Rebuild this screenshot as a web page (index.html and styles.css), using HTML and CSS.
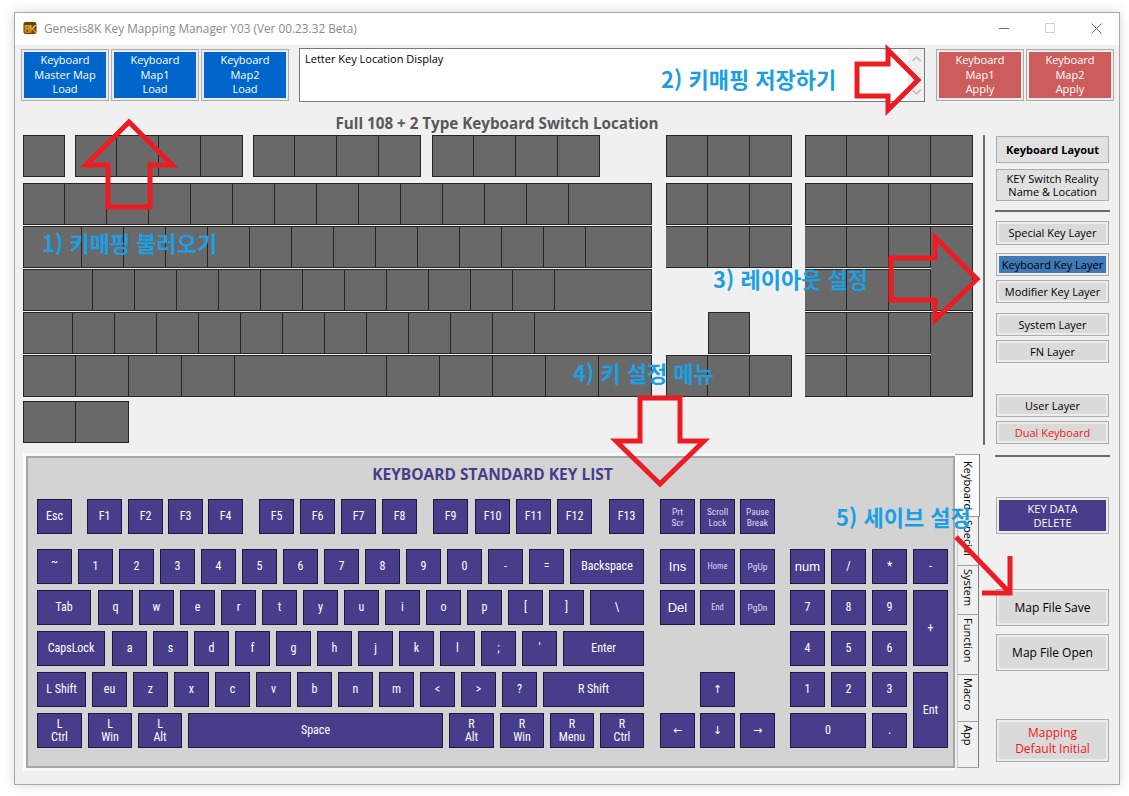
FILE: index.html
```html
<!DOCTYPE html>
<html lang="ko">
<head>
<meta charset="utf-8">
<title>Genesis8K Key Mapping Manager</title>
<link rel="stylesheet" href="styles.css">
</head>
<body>
<div class="window">
  <div class="titlebar">
    <svg class="appicon" width="14" height="14" viewBox="0 0 14 14">
      <defs><linearGradient id="gold" x1="0" y1="0" x2="0" y2="1"><stop offset="0" stop-color="#ffd955"/><stop offset="1" stop-color="#c27410"/></linearGradient></defs>
      <rect x="0.5" y="1" width="13" height="12" rx="2" fill="#6b4300"/>
      <text x="7" y="11.5" text-anchor="middle" font-family="Liberation Sans" font-weight="700" font-size="11" letter-spacing="-1" fill="url(#gold)">8K</text>
    </svg>
    <span class="title">Genesis8K Key Mapping Manager Y03 (Ver 00.23.32 Beta)</span>
    <div class="winctl">
      <span class="wc"><svg width="10" height="10" viewBox="0 0 10 10"><path d="M0 5.5h10" stroke="#6e6e6e" stroke-width="1"/></svg></span>
      <span class="wc"><svg width="10" height="10" viewBox="0 0 10 10"><rect x="0.5" y="0.5" width="9" height="9" fill="none" stroke="#cfcfcf"/></svg></span>
      <span class="wc"><svg width="11" height="11" viewBox="0 0 11 11"><path d="M0.5 0.5l10 10M10.5 0.5l-10 10" stroke="#6e6e6e" stroke-width="1"/></svg></span>
    </div>
  </div>

  <div class="client">
    <div class="toprow">
      <div class="fbtn"><div class="fin blue">Keyboard<br>Master Map<br>Load</div></div>
      <div class="fbtn ml2"><div class="fin blue">Keyboard<br>Map1<br>Load</div></div>
      <div class="fbtn ml2"><div class="fin blue">Keyboard<br>Map2<br>Load</div></div>
      <div class="textbox">
        <div class="tb-text">Letter Key Location Display</div>
        <div class="vscroll">
          <svg width="9" height="6" viewBox="0 0 9 6"><path d="M0.5 5L4.5 1L8.5 5" fill="none" stroke="#b4b4b4" stroke-width="1.2"/></svg>
          <svg width="9" height="6" viewBox="0 0 9 6"><path d="M0.5 1L4.5 5L8.5 1" fill="none" stroke="#b4b4b4" stroke-width="1.2"/></svg>
        </div>
      </div>
      <div class="fbtn ml11"><div class="fin red">Keyboard<br>Map1<br>Apply</div></div>
      <div class="fbtn ml2"><div class="fin red">Keyboard<br>Map2<br>Apply</div></div>
    </div>

    <div class="main">
      <div class="leftcol">
        <div class="heading">Full 108 + 2 Type Keyboard Switch Location</div>

        <div class="gk">
          <div class="gk-r1">
            <div class="gg"><i class="g"></i></div>
            <div class="gg m10"><i class="g"></i><i class="g"></i><i class="g"></i><i class="g"></i></div>
            <div class="gg m10"><i class="g"></i><i class="g"></i><i class="g"></i><i class="g"></i></div>
            <div class="gg m11"><i class="g"></i><i class="g"></i><i class="g"></i><i class="g"></i></div>
            <div class="gg m66"><i class="g"></i><i class="g"></i><i class="g"></i></div>
            <div class="gg m13"><i class="g"></i><i class="g"></i><i class="g"></i><i class="g"></i></div>
          </div>
          <div class="gk-low">
            <div class="gmain">
              <div class="grow"><i class="g"></i><i class="g"></i><i class="g"></i><i class="g"></i><i class="g"></i><i class="g"></i><i class="g"></i><i class="g"></i><i class="g"></i><i class="g"></i><i class="g"></i><i class="g"></i><i class="g"></i><i class="g w83"></i></div>
              <div class="grow"><i class="g w59"></i><i class="g"></i><i class="g"></i><i class="g"></i><i class="g"></i><i class="g"></i><i class="g"></i><i class="g"></i><i class="g"></i><i class="g"></i><i class="g"></i><i class="g"></i><i class="g"></i><i class="g w66"></i></div>
              <div class="grow"><i class="g w70"></i><i class="g"></i><i class="g"></i><i class="g"></i><i class="g"></i><i class="g"></i><i class="g"></i><i class="g"></i><i class="g"></i><i class="g"></i><i class="g"></i><i class="g"></i><i class="g w97"></i></div>
              <div class="grow"><i class="g w50"></i><i class="g"></i><i class="g"></i><i class="g"></i><i class="g"></i><i class="g"></i><i class="g"></i><i class="g"></i><i class="g"></i><i class="g"></i><i class="g"></i><i class="g"></i><i class="g w117"></i></div>
              <div class="grow"><i class="g w53"></i><i class="g w53"></i><i class="g w53"></i><i class="g w53"></i><i class="g w152"></i><i class="g w53"></i><i class="g w53"></i><i class="g w53"></i><i class="g w53"></i><i class="g w53"></i></div>
              <div class="grow r7"><i class="g w53"></i><i class="g w53"></i></div>
            </div>
            <div class="gnav">
              <i class="g"></i><i class="g nl"></i><i class="g nl"></i>
              <i class="g"></i><i class="g nl"></i><i class="g nl"></i>
              <b></b><b></b><b></b>
              <b></b><i class="g"></i><b></b>
              <i class="g"></i><i class="g nl"></i><i class="g nl"></i>
            </div>
            <div class="gnum">
              <i class="g"></i><i class="g nl"></i><i class="g nl"></i><i class="g nl"></i>
              <i class="g"></i><i class="g nl"></i><i class="g nl"></i><i class="g nl tall"></i>
              <i class="g"></i><i class="g nl"></i><i class="g nl"></i>
              <i class="g"></i><i class="g nl"></i><i class="g nl"></i><i class="g nl tall"></i>
              <i class="g"></i><i class="g nl"></i><i class="g nl"></i>
            </div>
          </div>
        </div>

        <div class="tabframe">
          <div class="kwrap">
            <div class="kpanel">
              <div class="kp-title">KEYBOARD STANDARD KEY LIST</div>
              <div class="pf">
                <span class="p">Esc</span>
                <span class="p ml15">F1</span><span class="p ml6">F2</span><span class="p ml5">F3</span><span class="p ml5">F4</span>
                <span class="p ml16">F5</span><span class="p ml6">F6</span><span class="p ml6">F7</span><span class="p ml6">F8</span>
                <span class="p ml16">F9</span><span class="p ml7">F10</span><span class="p ml6">F11</span><span class="p ml6">F12</span>
                <span class="p ml17">F13</span>
                <span class="p sm ml16">Prt<br>Scr</span><span class="p sm ml5">Scroll<br>Lock</span><span class="p sm ml5">Pause<br>Break</span>
              </div>
              <div class="plow">
                <div class="pmain">
                  <div class="prow">
                    <span class="p tilde">~</span><span class="p">1</span><span class="p">2</span><span class="p">3</span><span class="p">4</span><span class="p">5</span><span class="p">6</span><span class="p">7</span><span class="p">8</span><span class="p">9</span><span class="p">0</span><span class="p">-</span><span class="p">=</span><span class="p w74">Backspace</span>
                  </div>
                  <div class="prow">
                    <span class="p w54 mr1">Tab</span><span class="p">q</span><span class="p">w</span><span class="p">e</span><span class="p">r</span><span class="p">t</span><span class="p">y</span><span class="p">u</span><span class="p">i</span><span class="p">o</span><span class="p">p</span><span class="p">[</span><span class="p">]</span><span class="p w54">\</span>
                  </div>
                  <div class="prow">
                    <span class="p w68 mr1">CapsLock</span><span class="p">a</span><span class="p">s</span><span class="p">d</span><span class="p">f</span><span class="p">g</span><span class="p">h</span><span class="p">j</span><span class="p">k</span><span class="p">l</span><span class="p">;</span><span class="p">'</span><span class="p w81">Enter</span>
                  </div>
                  <div class="prow">
                    <span class="p w49">L Shift</span><span class="p">eu</span><span class="p">z</span><span class="p">x</span><span class="p">c</span><span class="p">v</span><span class="p">b</span><span class="p">n</span><span class="p">m</span><span class="p">&lt;</span><span class="p">&gt;</span><span class="p">?</span><span class="p w101">R Shift</span>
                  </div>
                  <div class="prow">
                    <span class="p w45">L<br>Ctrl</span><span class="p w44">L<br>Win</span><span class="p w44">L<br>Alt</span><span class="p w255">Space</span><span class="p w45">R<br>Alt</span><span class="p w44">R<br>Win</span><span class="p w44">R<br>Menu</span><span class="p w44">R<br>Ctrl</span>
                  </div>
                </div>
                <div class="pnav">
                  <span class="p big">Ins</span><span class="p xs">Home</span><span class="p sm">PgUp</span>
                  <span class="p big">Del</span><span class="p xs">End</span><span class="p sm">PgDn</span>
                  <b></b><b></b><b></b>
                  <b></b><span class="p arr">↑</span><b></b>
                  <span class="p arr">←</span><span class="p arr">↓</span><span class="p arr">→</span>
                </div>
                <div class="pnum">
                  <span class="p big">num</span><span class="p">/</span><span class="p">*</span><span class="p">-</span>
                  <span class="p">7</span><span class="p">8</span><span class="p">9</span><span class="p span2r">+</span>
                  <span class="p">4</span><span class="p">5</span><span class="p">6</span>
                  <span class="p">1</span><span class="p">2</span><span class="p">3</span><span class="p span2r">Ent</span>
                  <span class="p span2c">0</span><span class="p">.</span>
                </div>
              </div>
            </div>
          </div>
          <div class="vtabs">
            <div class="vt sel h63">Keyboard</div>
            <div class="vt h49">Special</div>
            <div class="vt h49">System</div>
            <div class="vt h60">Function</div>
            <div class="vt h47">Macro</div>
            <div class="vt h46">App</div>
          </div>
        </div>
      </div>

      <div class="rightcol">
        <div class="rupper">
          <div class="vline"></div>
          <div class="rbtns">
            <div class="rb h27 mt1 bold">Keyboard Layout</div>
            <div class="rb h32 mt6">KEY Switch Reality<br>Name &amp; Location</div>
            <div class="hr hr1"></div>
            <div class="rb2 h24 mt9"><div class="ri">Special Key Layer</div></div>
            <div class="rb2 h23 mt8"><div class="ri active">Keyboard Key Layer</div></div>
            <div class="rb2 h23 mt4"><div class="ri">Modifier Key Layer</div></div>
            <div class="rb2 h23 mt10"><div class="ri">System Layer</div></div>
            <div class="rb2 h23 mt4"><div class="ri">FN Layer</div></div>
            <div class="rb2 h23 mt31"><div class="ri">User Layer</div></div>
            <div class="rb2 h23 mt4"><div class="ri redtxt">Dual Keyboard</div></div>
          </div>
        </div>
        <div class="hr hr2"></div>
        <div class="rlow">
          <div class="rb2 h37 mt40"><div class="ri purple">KEY DATA<br>DELETE</div></div>
          <div class="rb2 h37 mt55"><div class="ri big13">Map File Save</div></div>
          <div class="rb2 h37 mt8"><div class="ri big13">Map File Open</div></div>
          <div class="rb2 h43 mt48"><div class="ri big13 redtxt">Mapping<br>Default Initial</div></div>
        </div>
      </div>
    </div>
  </div>
</div>

<svg class="anno" width="1129" height="796" viewBox="0 0 1129 796">
  <g fill="none" stroke="#ec1c24" stroke-width="5" stroke-linejoin="miter" stroke-miterlimit="10">
    <polygon points="129,122 172,165 150,165 150,207 108,207 108,165 86,165"/>
    <polygon points="857,64 888,64 888,50 918,80 888,110 888,96 857,96"/>
    <polygon points="891,258 935,258 935,237 977,279 935,320 935,300 891,300"/>
    <polygon points="640,398 680,398 680,441 704,441 660,484 616,441 640,441"/>
    <polyline points="956,537 1010,593"/>
    <polyline points="1010,556 1010,593 982,593"/>
  </g>
</svg>
<span class="note n1">1) 키매핑 불러오기</span>
<span class="note n2">2) 키매핑 저장하기</span>
<span class="note n3">3) 레이아웃 설정</span>
<span class="note n4">4) 키 설정 메뉴</span>
<span class="note n5">5) 세이브 설정</span>
</body>
</html>
```

FILE: styles.css
```css
* { box-sizing: border-box; margin: 0; padding: 0; }

html, body { width: 1129px; height: 796px; overflow: hidden; }

body {
  position: relative;
  background: #ffffff;
  padding: 12px 0 0 14px;
  font-family: "Open Sans", "Noto Sans", "Noto Sans CJK KR", sans-serif;
  font-size: 11px;
  color: #000;
}

i, b { display: block; font-style: normal; }

/* ---------- window ---------- */
.window {
  width: 1106px;
  height: 773px;
  border: 1px solid #a8a8a8;
  background: #f0f0f0;
  box-shadow: 0 0 10px rgba(0, 0, 0, 0.16);
  display: flex;
  flex-direction: column;
}

.titlebar {
  height: 32px;
  background: #fff;
  display: flex;
  align-items: center;
  flex: none;
}
.appicon { margin-left: 8px; margin-top: -2px; flex: none; }
.title { margin-left: 7px; margin-top: -3px; font-size: 11.8px; color: #8a8a8a; white-space: nowrap; }
.winctl { margin-left: auto; display: flex; align-self: flex-start; }
.wc { width: 46px; height: 30px; display: flex; align-items: center; justify-content: center; }

.client { flex: 1; padding-left: 6px; }

/* ---------- top row ---------- */
.toprow { display: flex; align-items: flex-start; padding-top: 4px; height: 57px; }
.fbtn {
  flex: none;
  width: 88px;
  height: 52px;
  border: 1px solid #adadad;
  padding: 2px;
  background: #ebebeb;
}
.ml2 { margin-left: 2px; }
.ml11 { margin-left: 11px; }
.fin {
  height: 100%;
  display: flex;
  align-items: center;
  justify-content: center;
  text-align: center;
  color: #fff;
  font-size: 11px;
  line-height: 14.5px;
}
.fin.blue { background: #0066cc; }
.fin.red { background: #cd5c5c; }

.textbox {
  flex: none;
  margin-left: 10px;
  margin-top: -1px;
  width: 626px;
  height: 54px;
  border: 1px solid #7a7a7a;
  background: #fff;
  display: flex;
}
.tb-text { flex: 1; padding: 2px 5px; font-size: 11px; line-height: 15px; }
.vscroll {
  width: 16px;
  background: #f0f0f0;
  display: flex;
  flex-direction: column;
  justify-content: space-between;
  align-items: center;
  padding: 7px 0 6px;
}

/* ---------- main ---------- */
.main { display: flex; }
.leftcol { width: 962px; padding-left: 2px; flex: none; }

.heading {
  width: 948px;
  margin-top: 13px;
  height: 16px;
  line-height: 16px;
  text-align: center;
  font-weight: 700;
  font-size: 15.2px;
  color: #585858;
}

/* gray switch-location keyboard */
.gk { margin-top: 4px; }
.gk-r1 { display: flex; height: 42px; }
.gg { display: flex; }
.m10 { margin-left: 10px; }
.m11 { margin-left: 11px; }
.m13 { margin-left: 13px; }
.m66 { margin-left: 66px; }

.g {
  flex: none;
  width: 42px;
  height: 42px;
  border: 1px solid #262626;
  background: #696969;
}
.g + .g { border-left: 0; }
.gnav .g.nl, .gnum .g.nl { border-left: 0; }

.w50 { width: 50px; }
.w53 { width: 53px; }
.w59 { width: 59px; }
.w66 { width: 66px; }
.w70 { width: 70px; }
.w83 { width: 83px; }
.w97 { width: 97px; }
.w117 { width: 117px; }
.w152 { width: 152px; }

.gk-low { display: flex; align-items: flex-start; margin-top: 6px; }
.gmain { display: flex; flex-direction: column; gap: 1px; width: 629px; flex: none; }
.grow { display: flex; height: 42px; }
.grow.r7 { margin-top: 3px; }
.gnav {
  display: grid;
  grid-template-columns: repeat(3, 42px);
  grid-auto-rows: 42px;
  row-gap: 1px;
  margin-left: 14px;
}
.gnum {
  display: grid;
  grid-template-columns: repeat(4, 42px);
  grid-auto-rows: 42px;
  row-gap: 1px;
  margin-left: 13px;
}
.g.tall { grid-row: span 2; height: auto; }

/* ---------- key list tab frame ---------- */
.tabframe { display: flex; margin-top: 10px; }
.kwrap {
  border-top: 3px solid #fbfbfb;
  border-left: 3px solid #fbfbfb;
  border-bottom: 3px solid #fbfbfb;
}
.kpanel {
  width: 929px;
  height: 312px;
  border: 2px solid #a6a6a6;
  background: #d3d3d3;
  padding: 8px 5px 0 9px;
}
.kp-title {
  height: 16px;
  line-height: 16px;
  text-align: center;
  font-weight: 700;
  font-size: 15.5px;
  color: #483d8b;
}

.p {
  flex: none;
  width: 35px;
  height: 35px;
  border: 1px solid #1c1840;
  background: #483d8b;
  color: #fff;
  display: flex;
  align-items: center;
  justify-content: center;
  text-align: center;
  font-family: "Liberation Sans Narrow", "Roboto Condensed", "Liberation Sans", sans-serif;
  font-size: 12px;
  line-height: 13px;
  white-space: nowrap;
}
.p.sm { font-size: 9.5px; line-height: 11px; color: #dcd9f2; }
.p.xs { font-size: 8.5px; color: #dcd9f2; }
.p.big { font-family: "Liberation Sans", sans-serif; font-size: 13px; }
.p.arr { font-family: "DejaVu Sans", sans-serif; font-size: 11px; }
.p.tilde { align-items: flex-start; padding-top: 6px; }

.pf { display: flex; margin-top: 17px; height: 35px; }
.ml5 { margin-left: 5px; }
.ml6 { margin-left: 6px; }
.ml7 { margin-left: 7px; }
.ml15 { margin-left: 15px; }
.ml16 { margin-left: 16px; }
.ml17 { margin-left: 17px; }
.mr1 { margin-right: 1px; }

.w44 { width: 44px; }
.w45 { width: 45px; }
.w49 { width: 49px; }
.w54 { width: 54px; }
.w68 { width: 68px; }
.w74 { width: 74px; }
.w81 { width: 81px; }
.w101 { width: 101px; }
.w255 { width: 255px; }

.plow { display: flex; align-items: flex-start; margin-top: 15px; }
.pmain { display: flex; flex-direction: column; gap: 6px; width: 607px; flex: none; }
.prow { display: flex; gap: 6px; }
.pnav {
  display: grid;
  grid-template-columns: repeat(3, 35px);
  grid-auto-rows: 35px;
  column-gap: 5px;
  row-gap: 6px;
  margin-left: 16px;
}
.pnum {
  display: grid;
  grid-template-columns: repeat(4, 35px);
  grid-auto-rows: 35px;
  gap: 6px;
  margin-left: 15px;
}
.p.span2r { grid-row: span 2; height: auto; }
.p.span2c { grid-column: span 2; width: auto; }

/* vertical tabs */
.vtabs { display: flex; flex-direction: column; padding-top: 1px; }
.vt {
  writing-mode: vertical-rl;
  width: 22px;
  margin-left: 2px;
  border: 1px solid #a0a0a0;
  border-right-color: #7d7d7d;
  border-left-color: #c8c8c8;
  border-top: 0;
  background: #f0f0f0;
  font-size: 11px;
  line-height: 20px;
  padding-top: 3px;
  color: #000;
}
.vt.sel {
  width: 25px;
  margin-left: 0;
  background: #fbfbfb;
  border-top: 1px solid #a0a0a0;
  border-left: 0;
  padding-top: 6px;
  line-height: 22px;
}
.h46 { height: 46px; }
.h47 { height: 47px; }
.h49 { height: 49px; }
.h60 { height: 60px; }
.h63 { height: 63px; }

/* ---------- right column ---------- */
.rightcol { width: 136px; flex: none; }
.rupper { display: flex; margin-top: 33px; }
.vline { width: 2px; height: 310px; background: #6b6b6b; flex: none; }
.rbtns { margin-left: 11px; width: 113px; display: flex; flex-direction: column; }
.rlow { margin-left: 13px; width: 113px; display: flex; flex-direction: column; }

.hr { height: 2px; background: #6b6b6b; }
.hr1 { margin: 9px 0 0 -1px; width: 115px; }
.hr2 { margin: 10px 0 0 12px; width: 115px; }

.rb {
  border: 1px solid #adadad;
  background: #e1e1e1;
  display: flex;
  align-items: center;
  justify-content: center;
  text-align: center;
  font-size: 11px;
  line-height: 13px;
}
.rb.bold { font-weight: 700; font-size: 11px; }
.rb2 {
  border: 1px solid #adadad;
  background: #ececec;
  padding: 2px;
}
.ri {
  height: 100%;
  background: #dadada;
  display: flex;
  align-items: center;
  justify-content: center;
  text-align: center;
  font-size: 11px;
  line-height: 14px;
}
.ri.active { background: #4179b7; }
.ri.redtxt { color: #f01818; }
.ri.purple { background: #483d8b; color: #fff; line-height: 14px; }
.ri.big13 { font-size: 12px; line-height: 16px; }

.h23 { height: 23px; }
.h24 { height: 24px; }
.h27 { height: 27px; }
.h32 { height: 32px; }
.h37 { height: 37px; }
.h43 { height: 43px; }
.mt1 { margin-top: 1px; }
.mt4 { margin-top: 4px; }
.mt6 { margin-top: 6px; }
.mt8 { margin-top: 8px; }
.mt9 { margin-top: 9px; }
.mt10 { margin-top: 10px; }
.mt31 { margin-top: 31px; }
.mt40 { margin-top: 40px; }
.mt48 { margin-top: 48px; }
.mt55 { margin-top: 55px; }

/* ---------- annotations (overlay) ---------- */
.anno { position: absolute; left: 0; top: 0; pointer-events: none; }
.note {
  position: absolute;
  font-family: "Noto Sans CJK KR", sans-serif;
  font-weight: 700;
  font-size: 22px;
  line-height: 22px;
  color: #1b9fe4;
  white-space: nowrap;
}
.n1 { left: 42px; top: 231px; }
.n2 { left: 661px; top: 67px; }
.n3 { left: 713px; top: 267px; }
.n4 { left: 573px; top: 361px; }
.n5 { left: 836px; top: 505px; }
```
